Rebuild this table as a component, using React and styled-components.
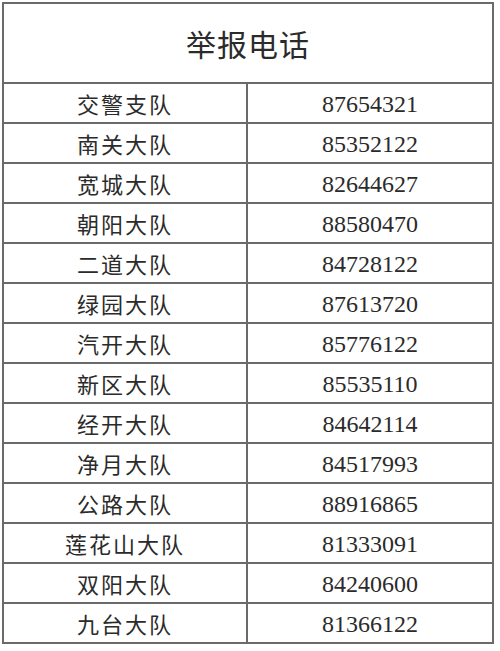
import React from "react";
import styled, { createGlobalStyle } from "styled-components";

const GlobalStyle = createGlobalStyle`
  html, body {
    margin: 0;
    padding: 0;
    background: #fff;
  }
`;

const Sheet = styled.div`
  display: grid;
  grid-template-columns: 244px 246px;
  grid-template-rows: 80px;
  grid-auto-rows: 40px;
  width: 492px;
  margin: 2px 0 0 2px;
  border-top: 2px solid #6a6a6a;
  border-left: 2px solid #6a6a6a;
  box-sizing: border-box;
  background: #fff;
`;

const Cell = styled.div`
  display: flex;
  align-items: center;
  justify-content: center;
  padding-top: ${(p) => p.$drop || 0}px;
  box-sizing: border-box;
  border-right: 2px solid #6a6a6a;
  border-bottom: 2px solid #6a6a6a;
  color: #2b2b2b;
`;

const Title = styled(Cell)`
  grid-column: 1 / span 2;
  font-family: "Noto Sans CJK SC", "Noto Sans", sans-serif;
  font-size: 30px;
  letter-spacing: 1px;
`;

const Unit = styled(Cell)`
  font-family: "Noto Sans CJK SC", "Noto Sans", sans-serif;
  font-size: 22px;
  letter-spacing: 2px;
`;

const Phone = styled(Cell)`
  font-family: "Liberation Serif", "DejaVu Serif", serif;
  font-size: 24px;
`;

const rows = [
  ["交警支队", "87654321"],
  ["南关大队", "85352122"],
  ["宽城大队", "82644627"],
  ["朝阳大队", "88580470"],
  ["二道大队", "84728122"],
  ["绿园大队", "87613720"],
  ["汽开大队", "85776122"],
  ["新区大队", "85535110"],
  ["经开大队", "84642114"],
  ["净月大队", "84517993"],
  ["公路大队", "88916865"],
  ["莲花山大队", "81333091"],
  ["双阳大队", "84240600"],
  ["九台大队", "81366122"],
];

export default function App() {
  return (
    <>
      <GlobalStyle />
      <Sheet>
        <Title>举报电话</Title>
        {rows.map(([name, phone]) => (
          <React.Fragment key={name}>
            <Unit>{name}</Unit>
            <Phone $drop={2}>{phone}</Phone>
          </React.Fragment>
        ))}
      </Sheet>
    </>
  );
}
